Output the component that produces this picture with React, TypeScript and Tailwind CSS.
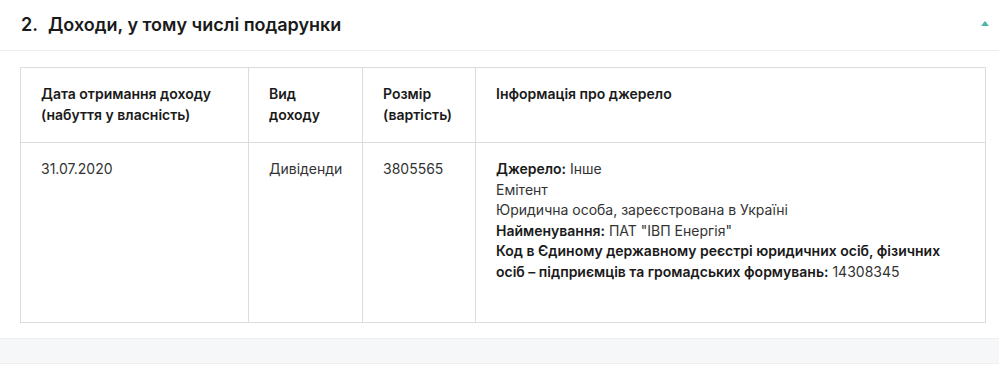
const font = { fontFamily: "Inter, 'Noto Sans', sans-serif" }

type Row = { date: string; kind: string; amount: string }

const row: Row = { date: "31.07.2020", kind: "Дивіденди", amount: "3805565" }

export default function App() {
  return (
    <div className="h-[369px] w-[999px] bg-white text-[#222]" style={font}>
      <div className="flex h-[51px] items-center justify-between border-b border-[#eeeeee] pr-[10px] pl-[21px]">
        <h2 className="text-[18px] leading-none font-semibold text-[#1a1a1a]">
          <span className="mr-[10px]">2.</span>Доходи, у тому числі подарунки
        </h2>
        <span
          aria-hidden
          className="mt-[-4px] h-0 w-0 border-x-[4px] border-b-[5px] border-x-transparent border-b-[#4fb5a5]"
        />
      </div>

      <div className="px-[20px] pt-[16px] pb-[15px]">
        <table className="w-[966px] table-fixed border-collapse border border-[#dcdcdc] text-[14px] leading-[20.6px]">
          <colgroup>
            <col className="w-[228px]" />
            <col className="w-[114px]" />
            <col className="w-[113px]" />
            <col />
          </colgroup>
          <thead>
            <tr className="h-[75px] text-left align-top font-semibold text-[#1a1a1a]">
              <th className="border-r border-[#dcdcdc] px-[20px] pt-[16px] font-semibold">
                Дата отримання доходу
                <br />
                (набуття у власність)
              </th>
              <th className="border-r border-[#dcdcdc] px-[20px] pt-[16px] font-semibold">
                Вид
                <br />
                доходу
              </th>
              <th className="border-r border-[#dcdcdc] px-[20px] pt-[16px] font-semibold">
                Розмір
                <br />
                (вартість)
              </th>
              <th className="px-[20px] pt-[16px] font-semibold">Інформація про джерело</th>
            </tr>
          </thead>
          <tbody>
            <tr className="h-[180px] border-t border-[#dcdcdc] align-top text-[#333]">
              <td className="border-r border-[#dcdcdc] px-[20px] pt-[16px]">{row.date}</td>
              <td className="border-r border-[#dcdcdc] px-[20px] pt-[16px]">{row.kind}</td>
              <td className="border-r border-[#dcdcdc] px-[20px] pt-[16px]">{row.amount}</td>
              <td className="px-[20px] pt-[16px]">
                <div>
                  <b className="font-semibold text-[#1a1a1a]">Джерело:</b> Інше
                </div>
                <div>Емітент</div>
                <div>Юридична особа, зареєстрована в Україні</div>
                <div>
                  <b className="font-semibold text-[#1a1a1a]">Найменування:</b> ПАТ "ІВП Енергія"
                </div>
                <div>
                  <b className="font-semibold text-[#1a1a1a]">
                    Код в Єдиному державному реєстрі юридичних осіб, фізичних осіб – підприємців та
                    громадських формувань:
                  </b>
                  <span> 14308345</span>
                </div>
              </td>
            </tr>
          </tbody>
        </table>
      </div>

      <div className="h-[26px] border-y border-[#eeeeee] bg-[#f6f7f9]" />
    </div>
  )
}
